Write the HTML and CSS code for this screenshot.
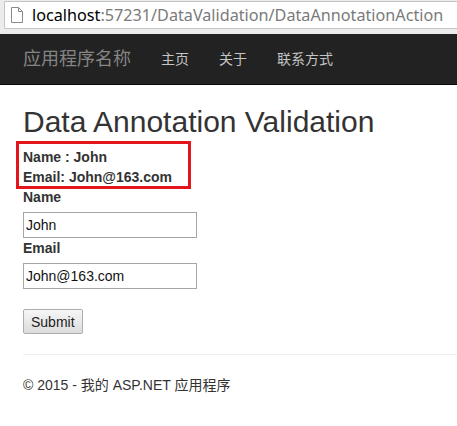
FILE: index.html
```html
<!DOCTYPE html>
<html lang="zh-CN">
<head>
    <meta charset="UTF-8">
    <meta name="viewport" content="width=device-width, initial-scale=1.0">
    <title>Data Annotation Validation</title>
    <link rel="stylesheet" href="styles.css">
</head>
<body>
    <div class="chrome">
        <div class="address">
            <svg class="page-icon" width="12" height="16" viewBox="0 0 12 16">
                <path d="M0.5 0.5 H7.5 L11.5 4.5 V15.5 H0.5 Z" fill="#fff" stroke="#8a8a8a"/>
                <path d="M7.5 0.5 V4.5 H11.5" fill="none" stroke="#8a8a8a"/>
            </svg>
            <span class="host">localhost</span><span class="path">:57231/DataValidation/DataAnnotationAction</span>
        </div>
    </div>

    <nav class="navbar">
        <a class="brand" href="#">应用程序名称</a>
        <ul class="nav">
            <li><a href="#">主页</a></li>
            <li><a href="#">关于</a></li>
            <li><a href="#">联系方式</a></li>
        </ul>
    </nav>

    <div class="container">
        <h2 class="title">Data Annotation Validation</h2>

        <div class="result">
            <div>Name : John</div>
            <div>Email: John@163.com</div>
        </div>

        <form class="form">
            <label for="name">Name</label>
            <input type="text" id="name" value="John">
            <label for="email">Email</label>
            <input type="text" id="email" value="John@163.com">
            <button type="button" class="submit">Submit</button>
        </form>

        <hr class="rule">
        <footer class="footer">© 2015 - 我的 ASP.NET 应用程序</footer>
    </div>
</body>
</html>
```

FILE: styles.css
```css
/* Global Styles */
body {
    margin: 0;
    font-family: "Liberation Sans", "Noto Sans CJK SC", sans-serif;
    font-size: 14px;
    line-height: 20px;
    color: #333;
    background-color: #fff;
}

/* Browser address bar */
.chrome {
    height: 34px;
    box-sizing: border-box;
    padding: 1px 0 0 4px;
    background-color: #ececec;
}

.address {
    height: 28px;
    box-sizing: border-box;
    display: flex;
    align-items: center;
    padding-left: 6px;
    background-color: #fff;
    border: 1px solid #c4c4c4;
    border-right: none;
    border-radius: 2px 0 0 2px;
    font-family: "Noto Sans", sans-serif;
    font-size: 16.2px;
    white-space: nowrap;
    overflow: hidden;
}

.page-icon {
    margin-right: 9px;
    flex-shrink: 0;
}

.host {
    color: #000;
}

.path {
    color: #7a7a7a;
}

/* Navbar */
.navbar {
    height: 51px;
    box-sizing: border-box;
    display: flex;
    align-items: center;
    padding-left: 23px;
    background-color: #222;
    border-bottom: 1px solid #080808;
}

.brand {
    font-size: 18px;
    color: #858585;
    text-decoration: none;
    margin-right: 15px;
}

.nav {
    display: flex;
    list-style: none;
    margin: 0;
    padding: 0;
}

.nav a {
    display: block;
    padding: 0 15px;
    font-size: 14px;
    color: #c4c4c4;
    text-decoration: none;
}

/* Content */
.container {
    padding-left: 23px;
}

.title {
    margin: 20px 0 9px;
    font-size: 30px;
    line-height: 33px;
    font-weight: normal;
    color: #333;
}

.result {
    position: relative;
    display: inline-block;
    font-weight: bold;
}

/* red annotation frame around the result */
.result::after {
    content: "";
    position: absolute;
    top: -6px;
    bottom: -2px;
    left: -7px;
    right: -19px;
    border: 3px solid #e4141b;
}

.form label {
    display: block;
    font-weight: bold;
    margin-bottom: 5px;
}

.form input {
    display: block;
    width: 174px;
    height: 26px;
    box-sizing: border-box;
    padding: 1px 2px;
    border: 1px solid #a6a6a6;
    font-family: "Liberation Sans", sans-serif;
    font-size: 14px;
    color: #111;
}

.submit {
    display: block;
    margin-top: 20px;
    height: 25px;
    padding: 0 7px;
    font-family: "Liberation Sans", sans-serif;
    font-size: 14px;
    color: #222;
    background: linear-gradient(#f6f6f6, #dcdcdc);
    border: 1px solid #adadad;
    border-radius: 2px;
}

.rule {
    margin: 20px 0 20px;
    border: 0;
    border-top: 1px solid #eee;
}

.footer {
    color: #333;
}
```
